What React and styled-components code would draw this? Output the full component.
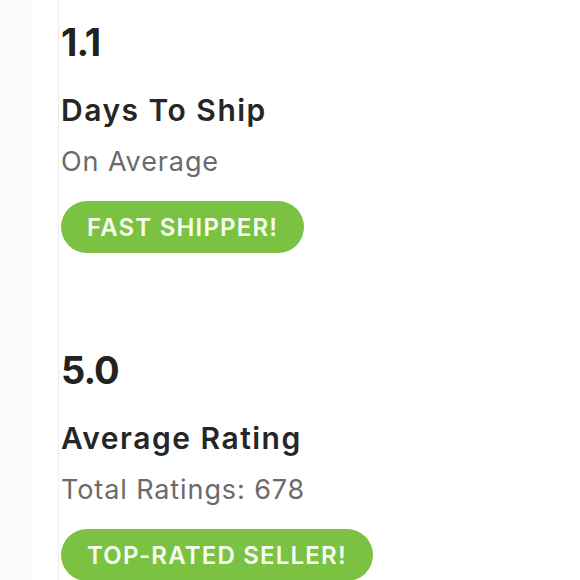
import styled, { createGlobalStyle } from 'styled-components';

const GlobalStyle = createGlobalStyle`
  html, body {
    margin: 0;
    padding: 0;
    background: #ffffff;
  }
  body {
    font-family: 'Inter', 'Liberation Sans', sans-serif;
  }
`;

const Page = styled.div`
  display: flex;
  height: 580px;
  overflow: hidden;
`;

const SideStrip = styled.div`
  width: 32px;
  flex-shrink: 0;
  background: #fafafa;
`;

const Gutter = styled.div`
  width: 26px;
  flex-shrink: 0;
  background: #ffffff;
  border-right: 1px solid #ececec;
`;

const Content = styled.div`
  display: flex;
  flex-direction: column;
  gap: 98px;
  padding: 23px 0 0 2px;
`;

const Stat = styled.section`
  display: flex;
  flex-direction: column;
  align-items: flex-start;
`;

const Value = styled.div`
  font-size: 38px;
  line-height: 38px;
  font-weight: 700;
  letter-spacing: -1px;
  color: #222222;
`;

const Title = styled.div`
  margin-top: 35px;
  font-size: 30px;
  line-height: 29px;
  font-weight: 600;
  letter-spacing: 1.5px;
  color: #262626;
`;

const Note = styled.div`
  margin-top: 24px;
  font-size: 27px;
  line-height: 26px;
  font-weight: 400;
  letter-spacing: 0.9px;
  color: #6b6b6b;
`;

const Badge = styled.div`
  margin-top: 26px;
  display: flex;
  align-items: center;
  height: 52px;
  padding: 0 26px;
  border-radius: 26px;
  background: #7cc242;
  color: #f7fcf2;
  font-size: 24px;
  font-weight: 600;
  letter-spacing: 1.2px;
`;

const stats = [
  { value: '1.1', title: 'Days To Ship', note: 'On Average', badge: 'FAST SHIPPER!' },
  { value: '5.0', title: 'Average Rating', note: 'Total Ratings: 678', badge: 'TOP-RATED SELLER!' },
];

export default function App() {
  return (
    <Page>
      <GlobalStyle />
      <SideStrip />
      <Gutter />
      <Content>
        {stats.map((s) => (
          <Stat key={s.value}>
            <Value>{s.value}</Value>
            <Title>{s.title}</Title>
            <Note>{s.note}</Note>
            <Badge>{s.badge}</Badge>
          </Stat>
        ))}
      </Content>
    </Page>
  );
}
